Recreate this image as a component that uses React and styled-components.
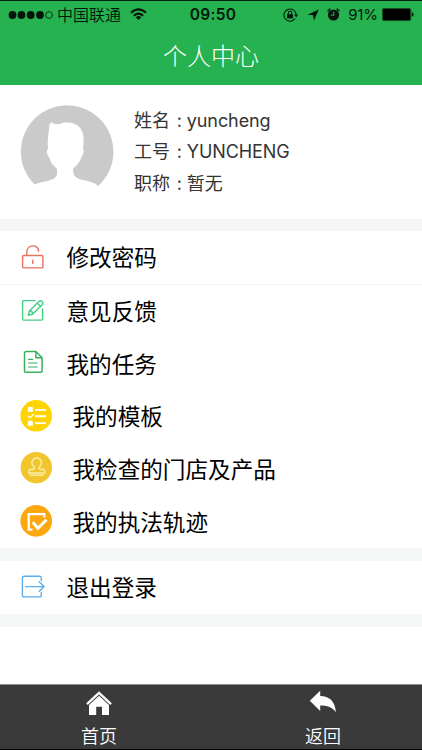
import styled, { createGlobalStyle } from "styled-components";

const GlobalStyle = createGlobalStyle`
  *, *::after {
    box-sizing: border-box;
  }

  body {
    margin: 0;
    background-color: #fff;
    font-family: Inter, "Noto Sans CJK SC", sans-serif;
  }

  svg {
    display: block;
    flex-shrink: 0;
  }
`;

const Page = styled.div`
  display: flex;
  flex-direction: column;
  width: 422px;
  height: 750px;
  overflow: hidden;
`;

const Header = styled.header`
  height: 85px;
  background-color: #26b250;
  border-top: 1px solid #08260f;
`;

const StatusBar = styled.div`
  display: grid;
  grid-template-columns: 1fr auto 1fr;
  align-items: center;
  height: 28px;
  padding: 0 8px;
  font-size: 15px;
  line-height: 28px;
  color: #04170a;
`;

const StatusGroup = styled.div`
  display: flex;
  align-items: center;
`;

const StatusIcons = styled(StatusGroup)`
  justify-content: flex-end;
  gap: 8px;
`;

const Power = styled.div`
  display: flex;
  align-items: center;
  gap: 4px;
  letter-spacing: -0.1px;
`;

const Carrier = styled.span`
  margin: 0 9px 0 4px;
  font-size: 16px;
  font-weight: 350;
`;

const Clock = styled.span`
  font-size: 15.5px;
  font-weight: 600;
  letter-spacing: 0.3px;
  padding-left: 4px;
`;

const Title = styled.h1`
  margin: 0;
  height: 56px;
  font-size: 24px;
  font-weight: 300;
  line-height: 56px;
  text-align: center;
  color: #fff;
`;

const Profile = styled.section`
  display: flex;
  height: 134px;
  padding: 20px 0 0 20px;
`;

const Details = styled.dl`
  margin: 0 0 0 20px;
  font-size: 18px;
  line-height: 31.3px;
  letter-spacing: -0.1px;
  color: #333;
`;

const Detail = styled.div`
  display: flex;

  dt::after {
    content: ':';
    display: inline-block;
    width: 17px;
    padding-left: 7px;
  }

  dd {
    margin: 0;
  }
`;

const Divider = styled.div`
  height: ${({ $height }) => $height}px;
  background-color: #f5f7f7;
`;

const Row = styled.div`
  display: flex;
  align-items: center;
  gap: 20.5px;
  height: ${({ $height }) => $height || 52.6}px;
  padding: 1px 0 0 20px;
  border-bottom: ${({ $line }) => ($line ? "1px solid #f5f5f5" : "none")};
  font-size: 22.6px;
  line-height: 32px;
  color: #000;

  svg {
    margin-top: -3px;
  }
`;

const TabBar = styled.nav`
  display: flex;
  height: 66px;
  margin-top: auto;
  background-color: #3a3a3a;
  border-top: 1px solid #8a908d;
  border-bottom: 1px solid #000;
`;

const Tab = styled.div`
  display: flex;
  flex-direction: column;
  align-items: center;
  width: ${({ $width }) => $width}px;
  padding: 5px 0 0 ${({ $indent }) => $indent || 0}px;
  font-size: 18px;
  font-weight: 350;
  line-height: 26px;
  color: #fff;

  svg {
    margin-bottom: 8px;
  }
`;

const Signal = () => (
  <svg width="45" height="10" viewBox="0 0 45 10">
    {[4.5, 13.5, 22.7, 32].map((cx) => <circle key={cx} cx={cx} cy="5" r="3.9" fill="#04170a" />)}
    <circle cx="41" cy="5" r="3.4" fill="none" stroke="#04170a" strokeWidth="0.8" />
  </svg>
);

const Wifi = () => (
  <svg width="17" height="14" viewBox="0 0 17 14" fill="none" stroke="#04170a" strokeWidth="2.1">
    <path d="M1 4.8Q8.5 -2.1 16 4.8" />
    <path d="M3.8 7.7Q8.5 3.5 13.2 7.7" />
    <path d="M8.5 12L5.7 9.2Q8.5 7 11.3 9.2Z" fill="#04170a" stroke="none" />
  </svg>
);

const RotationLock = () => (
  <svg width="16" height="15" viewBox="0 0 16 15" fill="none" stroke="#04170a">
    <path d="M12.1 10.5A6.1 6.1 0 1 1 13.1 6.5" strokeWidth="1.1" />
    <path d="M11 6.5h4.3l-2.1 2.8z" fill="#04170a" stroke="none" />
    <rect x="4.1" y="6.2" width="5.8" height="4.2" fill="#04170a" stroke="none" />
    <path d="M5.3 6.5V5a1.7 1.7 0 0 1 3.4 0v1.5" strokeWidth="1.1" />
  </svg>
);

const Location = () => (
  <svg width="12" height="13" viewBox="0 0 12 13">
    <path d="M11.8 0.4L7 11.5L6.1 6.2L0.4 5.7Z" fill="#04170a" />
  </svg>
);

const Alarm = () => (
  <svg width="13" height="14" viewBox="0 0 13 14" fill="none">
    <circle cx="6.5" cy="7" r="5.6" fill="#04170a" />
    <path d="M0.6 3.3L3.3 0.8M12.4 3.3L9.7 0.8" stroke="#04170a" strokeWidth="1.5" />
    <path d="M6.7 3.8V7.3H3.9" stroke="#26b250" strokeWidth="1.1" />
  </svg>
);

const Battery = () => (
  <svg width="32" height="14" viewBox="0 0 32 14">
    <rect x="0.4" y="0.4" width="28.4" height="12.2" rx="1.6" fill="none" stroke="#04170a" strokeWidth="0.7" />
    <rect x="1" y="1" width="27.2" height="11" rx="0.8" fill="#000" />
    <path d="M29.8 4.3Q31.6 4.8 31.6 6.5T29.8 8.7Z" fill="#04170a" />
  </svg>
);

const Avatar = () => (
  <svg width="94" height="94" viewBox="0 4.8 94 94">
    <path
      fill="#cacaca"
      d="M14.5 84.3A46.3 46.3 0 1 1 78.2 85.8C74 81.5 66 80.7 59.5 78.8C54.5 77.2 52.5 73.5 53.2 68.2C57 65.4 60.5 60.5 61.5 57C63.2 54.5 64.6 50.8 63 48.5C64.1 40 64.1 32.5 59.8 27.4C56 23 51 21.6 44 22.4C38.5 24.7 34.5 24.4 31.3 22.1C28.7 23.5 29.3 29.4 28.5 33C27.5 38.5 27.6 44 28 48.5C26.1 50.5 26.8 54 29 57C30.4 61.5 33 65.8 36.8 68.2C37.5 73.5 37.3 76.5 33.5 78.5C28 81.6 20 81.6 14.5 84.3Z"
    />
  </svg>
);

const LockIcon = () => (
  <svg width="26" height="26" viewBox="0 0 26 26" fill="none" stroke="#e8705f" strokeWidth="1.4" strokeLinecap="round">
    <rect x="2.6" y="11.5" width="20.3" height="12.4" rx="1.2" />
    <path d="M6.8 11.3V8.1C6.8 -0.1 18.6 -0.1 18.6 7.3M12.8 16.1v3.5" />
  </svg>
);

const FeedbackIcon = () => (
  <svg width="26" height="26" viewBox="0 0 26 26" fill="none" stroke="#45cd84" strokeWidth="1.4" strokeLinecap="round" strokeLinejoin="round">
    <path d="M14.9 2.6H3.6Q2.6 2.6 2.6 3.6V21.1Q2.6 22.1 3.6 22.1H21.6Q22.6 22.1 22.6 21.1V11" />
    <path d="M8.3 17.3L9.5 12.8L18.9 3.4Q20.3 2 22 3.6T22.2 6.8L12.8 16.1ZM17.3 5.1L20.6 8.4M9.5 12.8Q12.3 13 12.8 16.1" />
  </svg>
);

const TaskIcon = () => (
  <svg width="26" height="26" viewBox="0 0 26 26" fill="none" stroke="#39b05d" strokeWidth="1.5" strokeLinecap="round" strokeLinejoin="round">
    <path d="M6.2 1.5H15.9L22.1 7.7V21Q22.1 22.3 20.8 22.3H5.8Q4.5 22.3 4.5 21V3.2Q4.5 1.5 6.2 1.5ZM15.9 1.8V7.7H21.9" />
    <path d="M8.5 9.3h4.3M8.5 13h8.6M8.5 17h8.6" strokeWidth="1.2" />
  </svg>
);

const TemplateIcon = () => (
  <svg width="32" height="32" viewBox="0 0 32 32">
    <circle cx="16.2" cy="15.8" r="15.8" fill="#fed402" />
    <path d="M7.8 7h5v5h-5zM7.8 20.8h5v5h-5zM15 8.9h11v1.9h-11zM15 15.3h11v1.9h-11zM15 22.2h11v1.9h-11z" fill="#fff" />
    <path d="M7.7 15.8l2.3 2.1 3.9-3.9" fill="none" stroke="#fff" strokeWidth="1.3" />
  </svg>
);

const StampIcon = () => (
  <svg width="32" height="32" viewBox="0 0 32 32">
    <circle cx="16.3" cy="15.7" r="15.7" fill="#f1c62c" />
    <g fill="none" stroke="#fbeba5" strokeWidth="1.5" strokeLinejoin="round">
      <path d="M14.2 15C9.9 11.2 12.4 6 16.7 6S23.5 11.2 19.2 15C18.4 17 19.7 17.5 23.2 17.6Q24.7 17.8 24.7 19.3V20.9H8.7V19.3Q8.7 17.8 10.2 17.6C13.7 17.5 15 17 14.2 15Z" />
      <path d="M9.7 23.2H23.7" />
    </g>
  </svg>
);

const TrackIcon = () => (
  <svg width="32" height="32" viewBox="0 0 32 32" fill="none" stroke="#fff">
    <circle cx="16.2" cy="15.9" r="15.8" fill="#fba70d" stroke="none" />
    <path d="M12.5 24.7H8.7V9.1H24.3V12.5" strokeWidth="2.3" />
    <path d="M12.8 17.2L17.9 23.2L26.5 14.7" strokeWidth="3" />
  </svg>
);

const LogoutIcon = () => (
  <svg width="26" height="26" viewBox="0 0 26 26" fill="none" stroke="#5daeea" strokeWidth="1.4" strokeLinecap="round" strokeLinejoin="round">
    <path d="M21.3 6.5V4.2Q21.3 2.3 19.5 2.3H4.3Q2.4 2.3 2.4 4.2V21Q2.4 22.9 4.3 22.9H19.5Q21.3 22.9 21.3 21V18.5" />
    <path d="M5.5 12.6H23.8M19.2 7.7L24.1 12.6L19.2 17.5" />
  </svg>
);

const HomeIcon = () => (
  <svg width="26" height="26" viewBox="0 0 26 26" fill="#fff">
    <path d="M13 1.2L25.8 13.2L24.3 14.9L13 4.6L1.7 14.9L0.2 13.2Z" />
    <path d="M13 5.8L23 14.9V25H16V16.7H10.2V25H3V14.9Z" />
  </svg>
);

const BackIcon = () => (
  <svg width="28" height="26" viewBox="0 0 28 26" fill="#fff">
    <path d="M0.8 10.8L11.2 0.8V5.9C20 5.9 26.2 10.8 26.8 22.2C22.7 16.9 18 15.6 11.2 15.6V21Z" />
  </svg>
);

const details = [
  ["姓名", "yuncheng"],
  ["工号", "YUNCHENG"],
  ["职称", "暂无"],
];

const menu = [
  { label: "意见反馈", Icon: FeedbackIcon },
  { label: "我的任务", Icon: TaskIcon },
  { label: "我的模板", Icon: TemplateIcon },
  { label: "我检查的门店及产品", Icon: StampIcon },
  { label: "我的执法轨迹", Icon: TrackIcon },
];

const App = () => (
  <Page>
    <GlobalStyle />
    <Header>
      <StatusBar>
        <StatusGroup>
          <Signal />
          <Carrier>中国联通</Carrier>
          <Wifi />
        </StatusGroup>
        <Clock>09:50</Clock>
        <StatusIcons>
          <RotationLock />
          <Location />
          <Alarm />
          <Power>91%<Battery /></Power>
        </StatusIcons>
      </StatusBar>
      <Title>个人中心</Title>
    </Header>
    <Profile>
      <Avatar />
      <Details>
        {details.map(([name, value]) =>
          <Detail key={name}>
            <dt>{name}</dt>
            <dd>{value}</dd>
          </Detail>
        )}
      </Details>
    </Profile>
    <Divider $height={12} />
    <Row $height={54.4} $line><LockIcon />修改密码</Row>
    {menu.map(({ label, Icon }) =>
      <Row key={label}><Icon />{label}</Row>
    )}
    <Divider $height={13} />
    <Row><LogoutIcon />退出登录</Row>
    <Divider $height={13} />
    <TabBar>
      <Tab $width={198}><HomeIcon />首页</Tab>
      <Tab $width={224} $indent={26}><BackIcon />返回</Tab>
    </TabBar>
  </Page>
);

export default App;
